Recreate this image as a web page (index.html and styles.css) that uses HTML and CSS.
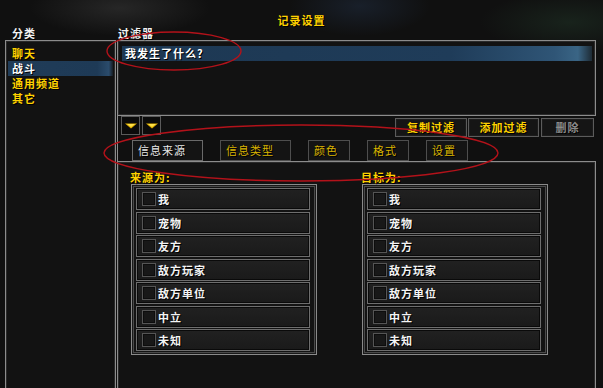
FILE: index.html
```html
<!DOCTYPE html>
<html lang="zh">
<head>
<meta charset="utf-8">
<title>记录设置</title>
<link rel="stylesheet" href="styles.css">
</head>
<body>
<div class="frame">
  <div class="title">记录设置</div>
  <div class="main">
    <div class="left">
      <div class="label label-left">分类</div>
      <div class="cat-panel">
        <div class="cat">聊天</div>
        <div class="cat sel">战斗</div>
        <div class="cat">通用频道</div>
        <div class="cat">其它</div>
      </div>
    </div>
    <div class="right">
      <div class="label label-right">过滤器</div>
      <div class="filter-box">
        <div class="filter-row">我发生了什么?</div>
      </div>
      <div class="mid">
        <div class="toolbar">
          <div class="arrows">
            <div class="arrow"><svg width="12" height="6" viewBox="0 0 12 6"><polygon points="0,0.5 12,0.5 6,5.5" fill="#e0b000"/><polygon points="2,1 10,1 6,4" fill="#ffe14a"/></svg></div>
            <div class="arrow"><svg width="12" height="6" viewBox="0 0 12 6"><polygon points="0,0.5 12,0.5 6,5.5" fill="#e0b000"/><polygon points="2,1 10,1 6,4" fill="#ffe14a"/></svg></div>
          </div>
          <div class="actions">
            <div class="btn w72">复制过滤</div>
            <div class="btn w71">添加过滤</div>
            <div class="btn w53 disabled">删除</div>
          </div>
        </div>
        <div class="tabs">
          <div class="tab wide active">信息来源</div>
          <div class="tab wide">信息类型</div>
          <div class="tab">颜色</div>
          <div class="tab">格式</div>
          <div class="tab">设置</div>
        </div>
      </div>
      <div class="content">
        <div class="col">
          <div class="glabel">来源为:</div>
          <div class="group">
            <div class="item"><span class="check"></span>我</div>
            <div class="item"><span class="check"></span>宠物</div>
            <div class="item"><span class="check"></span>友方</div>
            <div class="item"><span class="check"></span>敌方玩家</div>
            <div class="item"><span class="check"></span>敌方单位</div>
            <div class="item"><span class="check"></span>中立</div>
            <div class="item"><span class="check"></span>未知</div>
          </div>
        </div>
        <div class="col">
          <div class="glabel">目标为:</div>
          <div class="group">
            <div class="item"><span class="check"></span>我</div>
            <div class="item"><span class="check"></span>宠物</div>
            <div class="item"><span class="check"></span>友方</div>
            <div class="item"><span class="check"></span>敌方玩家</div>
            <div class="item"><span class="check"></span>敌方单位</div>
            <div class="item"><span class="check"></span>中立</div>
            <div class="item"><span class="check"></span>未知</div>
          </div>
        </div>
      </div>
    </div>
  </div>
  <svg class="annot" width="603" height="388" viewBox="0 0 603 388">
    <ellipse cx="174" cy="51" rx="67" ry="19" fill="none" stroke="#b3121a" stroke-width="1.4"/>
    <ellipse cx="301" cy="153" rx="197" ry="28" fill="none" stroke="#b3121a" stroke-width="1.4"/>
  </svg>
</div>
</body>
</html>
```

FILE: styles.css
```css
* { box-sizing: border-box; }

html, body {
  margin: 0;
  padding: 0;
  background: #0f0f0f;
}

.frame {
  position: relative;
  width: 603px;
  height: 388px;
  overflow: hidden;
  font-family: "Noto Sans CJK SC", "Noto Sans", sans-serif;
  font-size: 11px;
  font-weight: 700;
  letter-spacing: 1px;
  color: #ffd200;
  text-shadow: 1px 1px 0 #000;
  background:
    radial-gradient(ellipse 90px 28px at 120px 8px, rgba(80,80,80,0.35), transparent),
    radial-gradient(ellipse 70px 30px at 360px 6px, rgba(40,60,90,0.35), transparent),
    radial-gradient(ellipse 90px 30px at 570px 22px, rgba(40,70,50,0.35), transparent),
    #101010;
}

.title {
  height: 27px;
  padding-top: 13px;
  line-height: 14px;
  text-align: center;
  color: #ffd200;
}

.main {
  display: flex;
  gap: 1px;
  padding-left: 5px;
}

.left { width: 111px; }
.right { width: 479px; }

.label {
  height: 13px;
  line-height: 13px;
  color: #f2f2f2;
}
.label-left { padding-left: 7px; }
.label-right { padding-left: 1px; }

.cat-panel {
  height: 360px;
  border: 1px solid #8c8c8c;
  box-shadow: inset 0 0 0 1px #2a2a2a;
  background: #121212;
  padding: 5px 2px 0 2px;
}

.cat {
  height: 15px;
  line-height: 15px;
  padding-left: 4px;
  color: #ffd200;
}
.cat.sel {
  color: #ffffff;
  background: linear-gradient(to right, #203c58, #1e3a56 85%, #2b4c6c 96%, rgba(40,70,100,0.2));
}

.filter-box {
  height: 76px;
  border: 1px solid #8c8c8c;
  box-shadow: inset 0 0 0 1px #2a2a2a;
  background: #121212;
  padding: 5px 3px 0 4px;
}

.filter-row {
  height: 15px;
  line-height: 15px;
  padding-left: 3px;
  color: #ffffff;
  background: linear-gradient(to right, #1d3853, #1f3c59 70%, #2f5576 92%, #3a6585 97%, rgba(58,101,133,0.3));
}

.mid {
  border-left: 1px solid #8c8c8c;
  height: 45px;
}

.toolbar {
  display: flex;
  height: 24px;
}

.arrows {
  display: flex;
  gap: 2px;
  margin-left: 3px;
}

.arrow {
  width: 19px;
  height: 19px;
  border: 1px solid #5a5a5a;
  background: #0b0b0b;
  display: flex;
  align-items: center;
  justify-content: center;
}

.actions {
  display: flex;
  gap: 1px;
  margin-left: auto;
  margin-right: 2px;
  margin-top: 2px;
}

.btn {
  height: 19px;
  line-height: 17px;
  text-align: center;
  border: 1px solid #5c5c5c;
  box-shadow: inset 0 0 0 1px #1c1c1c;
  background: #151515;
  color: #ffd200;
}
.w72 { width: 72px; }
.w71 { width: 71px; }
.w53 { width: 53px; margin-left: 1px; }
.btn.disabled { color: #8a8a8a; }

.tabs {
  display: flex;
  gap: 17px;
  padding-left: 14px;
  height: 21px;
}

.tab {
  width: 42px;
  height: 21px;
  line-height: 19px;
  padding-left: 5px;
  border: 1px solid #4e4e4e;
  background: #141414;
  color: #d9b400;
  font-weight: 400;
  letter-spacing: 1px;
}
.tab.wide { width: 71px; padding-left: 5px; }
.tab.active {
  color: #e8e8e8;
  border-color: #6a6a6a;
}

.content {
  border: 1px solid #8c8c8c;
  border-bottom: none;
  box-shadow: inset 1px 1px 0 #2a2a2a, inset -1px 0 0 #2a2a2a;
  background: #121212;
  height: 240px;
  display: flex;
  gap: 45px;
  padding-left: 13px;
  padding-top: 8px;
}

.col { width: 186px; }

.glabel {
  height: 14px;
  line-height: 14px;
  margin-left: -1px;
  color: #ffd200;
}

.group {
  border: 1px solid #8a8a8a;
  box-shadow: inset 0 0 0 1px #1a1a1a, inset 0 0 0 2px #4a4a4a;
  background: #131313;
  padding: 3px 6px 3px 4px;
  display: flex;
  flex-direction: column;
  gap: 1.5px;
}

.item {
  height: 22px;
  border: 1px solid #6e6e6e;
  box-shadow: inset 0 0 0 1px #0a0a0a;
  background: linear-gradient(#212121, #1a1a1a);
  display: flex;
  align-items: center;
  padding-left: 5px;
  color: #f4f4f4;
}

.check {
  width: 14px;
  height: 14px;
  margin-right: 2px;
  border: 1px solid #555;
  box-shadow: inset 0 0 0 1px #0d0d0d;
  background: #181818;
  flex: none;
}

.annot {
  position: absolute;
  left: 0;
  top: 0;
  pointer-events: none;
}
```
